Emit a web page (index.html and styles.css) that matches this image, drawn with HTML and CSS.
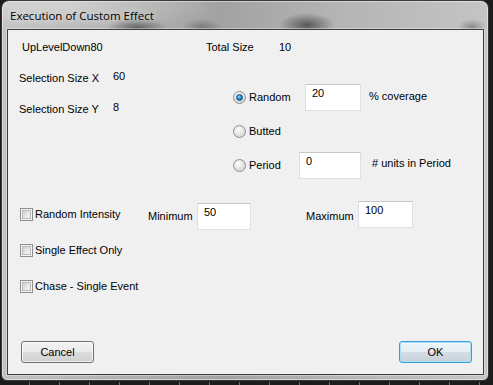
FILE: index.html
```html
<!DOCTYPE html>
<html lang="en">
<head>
    <meta charset="UTF-8">
    <title>Execution of Custom Effect</title>
    <link rel="stylesheet" href="styles.css">
</head>
<body>

<div class="window">
    <div class="titlebar">Execution of Custom Effect</div>

    <div class="client">
        <div class="head">
            <span class="effect-name">UpLevelDown80</span>
            <span class="total-label">Total Size</span>
            <span>10</span>
        </div>

        <div class="main">
            <div class="sizes">
                <div class="size-row">
                    <span class="size-label">Selection Size X</span>
                    <span class="size-value">60</span>
                </div>
                <div class="size-row">
                    <span class="size-label">Selection Size Y</span>
                    <span class="size-value">8</span>
                </div>
            </div>

            <div class="radios">
                <div class="radio-row">
                    <span class="radio checked"></span>
                    <span class="radio-label random">Random</span>
                    <input class="textbox coverage" type="text" value="20">
                    <span class="after coverage-text">% coverage</span>
                </div>
                <div class="radio-row">
                    <span class="radio"></span>
                    <span class="radio-label">Butted</span>
                </div>
                <div class="radio-row">
                    <span class="radio"></span>
                    <span class="radio-label period">Period</span>
                    <input class="textbox units" type="text" value="0">
                    <span class="after units-text"># units in Period</span>
                </div>
            </div>
        </div>

        <div class="checks">
            <div class="check-row intensity">
                <span class="checkbox"></span>
                <span class="check-label intensity-label">Random Intensity</span>
                <span class="min-label">Minimum</span>
                <input class="textbox minimum" type="text" value="50">
                <span class="max-label">Maximum</span>
                <input class="textbox maximum" type="text" value="100">
            </div>
            <div class="check-row">
                <span class="checkbox"></span>
                <span class="check-label">Single Effect Only</span>
            </div>
            <div class="check-row">
                <span class="checkbox"></span>
                <span class="check-label">Chase - Single Event</span>
            </div>
        </div>

        <div class="footer">
            <button class="btn">Cancel</button>
            <button class="btn default">OK</button>
        </div>
    </div>
</div>

</body>
</html>
```

FILE: styles.css
```css
body {
    margin: 0;
    background-color: #1c1c1c;
    background-image:
        repeating-linear-gradient(90deg, transparent 0, transparent 29px, #6a6a6a 29px, #6a6a6a 30px);
    background-size: 100% 3px;
    background-position: 0 382px;
    background-repeat: no-repeat;
    font-family: "Liberation Sans", Arial, sans-serif;
    font-size: 11px;
    color: #000;
    width: 493px;
    height: 385px;
    overflow: hidden;
}

.window {
    width: 488px;
    height: 381px;
    margin-left: 1px;
    box-sizing: border-box;
    border: 1px solid #3a3a3a;
    border-radius: 8px 8px 6px 6px;
    background:
        radial-gradient(ellipse 30px 10px at 135px 27px, rgba(40, 40, 40, 0.55), transparent),
        radial-gradient(ellipse 28px 12px at 305px 24px, rgba(30, 30, 30, 0.6), transparent),
        radial-gradient(ellipse 20px 8px at 200px 26px, rgba(60, 60, 60, 0.4), transparent),
        radial-gradient(ellipse 14px 8px at 470px 26px, rgba(70, 70, 70, 0.45), transparent),
        radial-gradient(ellipse 160px 25px at 60px 5px, rgba(255, 255, 255, 0.35), transparent),
        linear-gradient(90deg, #c2c2c2 0%, #b0b0b0 25%, #a2a2a2 45%, #b5b5b5 70%, #c4c4c4 100%);
    box-shadow: inset 0 0 0 1px rgba(255, 255, 255, 0.45);
    display: flex;
    flex-direction: column;
}

.titlebar {
    height: 28px;
    padding-left: 8px;
    line-height: 30px;
    font-family: "Open Sans", "Noto Sans", sans-serif;
    font-size: 11.5px;
    text-shadow: 0 0 6px rgba(255, 255, 255, 0.7);
}

.client {
    flex: 1;
    margin: 0 4px 5px 5px;
    background-color: #f0f0f0;
    border: 1px solid #3c3c3c;
    box-shadow: 0 0 0 1px rgba(255, 255, 255, 0.35);
    display: flex;
    flex-direction: column;
    line-height: 13px;
}

.head {
    display: flex;
    margin: 11px 0 0 14px;
}

.effect-name {
    width: 184px;
}

.total-label {
    width: 73px;
}

.main {
    display: flex;
}

.sizes {
    margin-left: 11px;
    width: 214px;
}

.size-row {
    display: flex;
    margin-top: 18px;
}

.size-label {
    width: 94px;
}

.size-value {
    margin-top: -2px;
}

.radios {
    margin-top: 30px;
    display: flex;
    flex-direction: column;
    gap: 7px;
}

.radio-row {
    height: 27px;
    display: flex;
    align-items: center;
}

.radio {
    width: 13px;
    height: 13px;
    box-sizing: border-box;
    border-radius: 50%;
    border: 1px solid #8e8f8f;
    background: radial-gradient(circle at 40% 35%, #fdfdfd 0%, #e6e6e6 45%, #c9c9c9 100%);
    position: relative;
}

.radio.checked::after {
    content: "";
    position: absolute;
    left: 2px;
    top: 2px;
    width: 7px;
    height: 7px;
    box-sizing: border-box;
    border-radius: 50%;
    border: 1px solid #1b4f7c;
    background: radial-gradient(circle at 40% 35%, #8fd6ff 0%, #2d8ed1 45%, #0b4d86 100%);
}

.radio-label {
    margin-left: 3px;
}

.random {
    width: 56px;
}

.period {
    width: 50px;
}

.textbox {
    box-sizing: border-box;
    height: 27px;
    margin: 0;
    padding: 1px 6px 11px;
    border: 1px solid #dcdfe4;
    border-top-color: #c4c7cc;
    background: #fff;
    font-family: "Liberation Sans", Arial, sans-serif;
    font-size: 11px;
    line-height: 13px;
    color: #000;
    outline: none;
}

.coverage {
    width: 56px;
}

.units {
    width: 62px;
}

.after {
    margin-top: -2px;
}

.coverage-text {
    margin-left: 8px;
}

.units-text {
    margin-left: 11px;
    margin-top: -4px;
}

.checks {
    margin-top: 22px;
    display: flex;
    flex-direction: column;
    gap: 9px;
}

.check-row {
    height: 27px;
    display: flex;
    align-items: center;
    padding-left: 12px;
}

.checkbox {
    width: 13px;
    height: 13px;
    box-sizing: border-box;
    border: 1px solid #8e8f8f;
    background: #f4f4f4;
    position: relative;
}

.checkbox::after {
    content: "";
    position: absolute;
    left: 1px;
    top: 1px;
    width: 9px;
    height: 9px;
    box-sizing: border-box;
    border: 1px solid #b9b9b9;
    background: linear-gradient(135deg, #d2d2d2 0%, #e9e9e9 60%, #f8f8f8 100%);
}

.check-label {
    margin-left: 2px;
}

.intensity-label {
    width: 113px;
}

.min-label {
    width: 49px;
    margin-top: 3px;
}

.minimum {
    width: 54px;
    margin-top: 4px;
}

.max-label {
    margin-left: 55px;
    width: 52px;
    margin-top: 3px;
}

.maximum {
    width: 55px;
}

.footer {
    margin-top: auto;
    margin-bottom: 11px;
    padding: 0 11px 0 13px;
    display: flex;
    justify-content: space-between;
}

.btn {
    width: 73px;
    height: 22px;
    box-sizing: border-box;
    border: 1px solid #707070;
    border-radius: 3px;
    background: linear-gradient(#f2f2f2 0%, #ebebeb 48%, #dddddd 52%, #cfcfcf 100%);
    box-shadow: inset 0 0 0 1px rgba(255, 255, 255, 0.7);
    font-family: "Liberation Sans", Arial, sans-serif;
    font-size: 11px;
    color: #000;
    padding: 0;
}

.btn.default {
    border-color: #3c9ad8;
    box-shadow: inset 0 0 0 1px #a6e0fb;
    background: linear-gradient(#eef6fb 0%, #e5eef4 48%, #d4dde3 52%, #c8d2d8 100%);
}
```
